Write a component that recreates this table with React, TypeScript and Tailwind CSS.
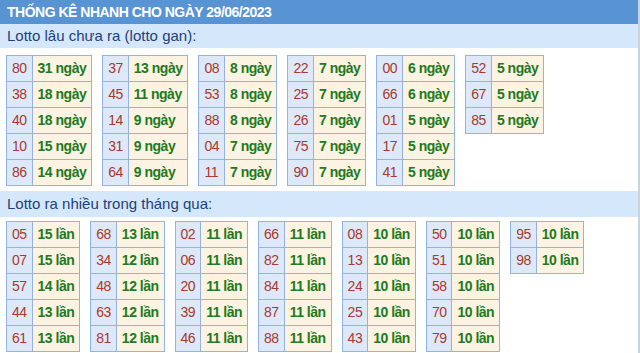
type Entry = [string, string];

const ganTables: Entry[][] = [
  [["80", "31"], ["38", "18"], ["40", "18"], ["10", "15"], ["86", "14"]],
  [["37", "13"], ["45", "11"], ["14", "9"], ["31", "9"], ["64", "9"]],
  [["08", "8"], ["53", "8"], ["88", "8"], ["04", "7"], ["11", "7"]],
  [["22", "7"], ["25", "7"], ["26", "7"], ["75", "7"], ["90", "7"]],
  [["00", "6"], ["66", "6"], ["01", "5"], ["17", "5"], ["41", "5"]],
  [["52", "5"], ["67", "5"], ["85", "5"]]
];

const hotTables: Entry[][] = [
  [["05", "15"], ["07", "15"], ["57", "14"], ["44", "13"], ["61", "13"]],
  [["68", "13"], ["34", "12"], ["48", "12"], ["63", "12"], ["81", "12"]],
  [["02", "11"], ["06", "11"], ["20", "11"], ["39", "11"], ["46", "11"]],
  [["66", "11"], ["82", "11"], ["84", "11"], ["87", "11"], ["88", "11"]],
  [["08", "10"], ["13", "10"], ["24", "10"], ["25", "10"], ["43", "10"]],
  [["50", "10"], ["51", "10"], ["58", "10"], ["70", "10"], ["79", "10"]],
  [["95", "10"], ["98", "10"]]
];

function StatTable({ rows, unit }: { rows: Entry[]; unit: string }) {
  return (
    <table className="border-collapse">
      <tbody>
        {rows.map(([num, count]) => (
          <tr key={num}>
            <td className="h-[26px] border border-[#94b3e2] bg-[#dde9f9] px-[5px] py-0 text-[14px] tracking-[-0.5px] text-[#a8392b]">
              {num}
            </td>
            <td className="h-[26px] whitespace-nowrap border border-[#94b3e2] bg-[#fdf3e2] px-[5px] py-0 text-[14px] font-bold tracking-[-0.5px] text-[#217a21]">
              {count} {unit}
            </td>
          </tr>
        ))}
      </tbody>
    </table>
  );
}

function Section({
  title,
  tables,
  unit,
  bandClass,
  bodyClass
}: {
  title: string;
  tables: Entry[][];
  unit: string;
  bandClass: string;
  bodyClass: string;
}) {
  return (
    <div>
      <div className={`flex items-center bg-[#d5e7fb] px-[7px] text-[15px] text-[#1f3f7c] ${bandClass}`}>
        {title}
      </div>
      <div className={`flex flex-wrap items-start gap-x-[10px] px-[6px] ${bodyClass}`}>
        {tables.map((rows, index) => (
          <StatTable key={index} rows={rows} unit={unit} />
        ))}
      </div>
    </div>
  );
}

export default function App() {
  return (
    <div
      className="h-[353px] w-[640px] overflow-hidden border-r-2 border-[#c9d2de] bg-white"
      style={{ fontFamily: '"Liberation Sans", Arial, sans-serif' }}
    >
      <div className="flex h-[24px] items-center bg-[#5893d4] px-[7px] text-[14px] font-bold tracking-[-0.5px] text-white">
        THỐNG KÊ NHANH CHO NGÀY 29/06/2023
      </div>
      <Section
        title="Lotto lâu chưa ra (lotto gan):"
        tables={ganTables}
        unit="ngày"
        bandClass="h-[24px]"
        bodyClass="pt-[7px]"
      />
      <div className="h-[5px]" />
      <Section
        title="Lotto ra nhiều trong tháng qua:"
        tables={hotTables}
        unit="lần"
        bandClass="h-[26px]"
        bodyClass="pt-[4px]"
      />
    </div>
  );
}
